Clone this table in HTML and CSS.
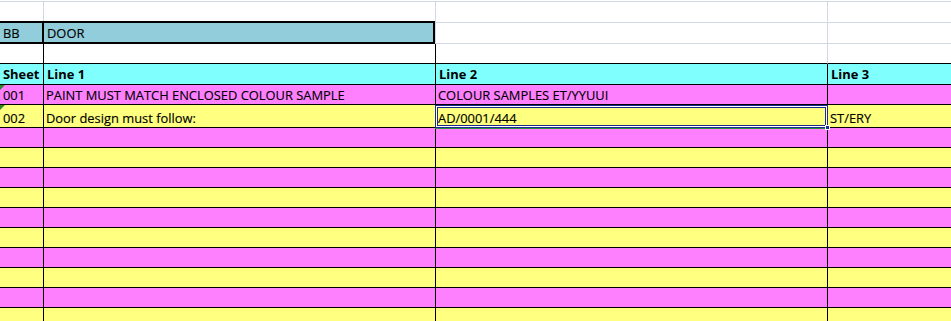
FILE: index.html
```html
<!DOCTYPE html>
<html>
<head>
<meta charset="utf-8">
<link rel="stylesheet" href="styles.css">
</head>
<body>
<div class="sheet">
  <div class="row r-top">
    <div class="cell"></div><div class="cell"></div><div class="cell"></div><div class="cell"></div>
  </div>
  <div class="row r-bb">
    <div class="cell bb-a">BB</div>
    <div class="cell bb-b">DOOR</div>
    <div class="cell bb-c"></div>
    <div class="cell bb-d"></div>
  </div>
  <div class="row r-blank">
    <div class="cell"></div><div class="cell"></div><div class="cell"></div><div class="cell"></div>
  </div>
  <div class="row r-head">
    <div class="cell">Sheet</div>
    <div class="cell">Line 1</div>
    <div class="cell">Line 2</div>
    <div class="cell">Line 3</div>
  </div>
  <div class="row data pink r-001">
    <div class="cell flag">001</div>
    <div class="cell">PAINT MUST MATCH ENCLOSED COLOUR SAMPLE</div>
    <div class="cell">COLOUR SAMPLES ET/YYUUI</div>
    <div class="cell"></div>
  </div>
  <div class="row data yellow r-002">
    <div class="cell flag">002</div>
    <div class="cell">Door design must follow:</div>
    <div class="cell selected">AD/0001/444<span class="sel-box"></span><span class="handle"></span></div>
    <div class="cell">ST/ERY</div>
  </div>
  <div class="row data pink"><div class="cell"></div><div class="cell"></div><div class="cell"></div><div class="cell"></div></div>
  <div class="row data yellow"><div class="cell"></div><div class="cell"></div><div class="cell"></div><div class="cell"></div></div>
  <div class="row data pink"><div class="cell"></div><div class="cell"></div><div class="cell"></div><div class="cell"></div></div>
  <div class="row data yellow"><div class="cell"></div><div class="cell"></div><div class="cell"></div><div class="cell"></div></div>
  <div class="row data pink"><div class="cell"></div><div class="cell"></div><div class="cell"></div><div class="cell"></div></div>
  <div class="row data yellow"><div class="cell"></div><div class="cell"></div><div class="cell"></div><div class="cell"></div></div>
  <div class="row data pink"><div class="cell"></div><div class="cell"></div><div class="cell"></div><div class="cell"></div></div>
  <div class="row data yellow"><div class="cell"></div><div class="cell"></div><div class="cell"></div><div class="cell"></div></div>
  <div class="row data pink"><div class="cell"></div><div class="cell"></div><div class="cell"></div><div class="cell"></div></div>
  <div class="row data yellow"><div class="cell"></div><div class="cell"></div><div class="cell"></div><div class="cell"></div></div>
</div>
</body>
</html>
```
FILE: styles.css
```css
html, body {
  margin: 0;
  padding: 0;
  background: #fff;
  overflow: hidden;
}

body {
  width: 951px;
  height: 321px;
  font-family: "Open Sans", "Liberation Sans", sans-serif;
  font-size: 12.9px;
  color: #000;
  -webkit-text-stroke: 0.15px #000;
}

.sheet {
  margin-top: 1px;
  display: flex;
  flex-direction: column;
  width: 951px;
}

.row {
  display: grid;
  grid-template-columns: 44px 392px 392px 1fr;
  flex: none;
}

.cell {
  box-sizing: border-box;
  display: flex;
  align-items: flex-end;
  padding: 0 0 1px 3px;
  line-height: 15px;
  white-space: nowrap;
  overflow: hidden;
}

/* top blank row: y 1..20 */
.r-top { height: 20px; }
.r-top .cell {
  border-top: 1px solid #d0d7e5;
  border-right: 1px solid #d0d7e5;
}
.r-top .cell:last-child { border-right: 0; }

/* BB / DOOR row: y 21..43 */
.r-bb { height: 23px; }
.bb-a, .bb-b {
  background: #92cddc;
  padding-bottom: 3px;
}
.bb-a {
  border-right: 1px solid #000;
  box-shadow: inset -1px 0 0 #000, inset 0 2px 0 #000, inset 0 -2px 0 #000;
}
.bb-b {
  border-right: 1px solid #d0d7e5;
  box-shadow: inset -2px 0 0 #000, inset 0 2px 0 #000, inset 0 -2px 0 #000;
}
.bb-c, .bb-d {
  border-top: 1px solid #fff;
  box-shadow: inset 0 1px 0 #d0d7e5, inset 0 -1px 0 #d0d7e5;
}
.bb-c { border-right: 1px solid #d0d7e5; }

/* blank row below: y 44..63 */
.r-blank { height: 20px; }
.r-blank .cell { border-bottom: 1px solid #000; }
.r-blank .cell:nth-child(1),
.r-blank .cell:nth-child(2) { border-right: 1px solid #000; }
.r-blank .cell:nth-child(3) { border-right: 1px solid #d0d7e5; }

/* header row: y 64..84 */
.r-head { height: 21px; background: #80ffff; font-weight: 700; }
.r-head .cell {
  border-right: 1px solid #000;
  border-bottom: 1px solid #000;
  padding-bottom: 2px;
  -webkit-text-stroke: 0;
}
.r-head .cell:last-child { border-right: 0; }

/* data rows */
.data { height: 20px; }
.r-002 { height: 23px; }
.pink { background: #ff80ff; }
.yellow { background: #ffff80; }
.data .cell {
  border-right: 1px solid #000;
  border-bottom: 1px solid #000;
}
.data .cell:last-child { border-right: 0; }
.data .cell:nth-child(n+2) { padding-left: 2px; }
.data .cell:first-child { padding-left: 3px; }

.flag { position: relative; }
.flag::before {
  content: "";
  position: absolute;
  left: 0;
  top: 0;
  width: 0;
  height: 0;
  border-top: 5px solid #2a8a2a;
  border-right: 5px solid transparent;
}

/* selected cell overlay */
.selected { position: relative; overflow: visible; }
.sel-box {
  position: absolute;
  left: -1px;
  top: 0;
  right: -1px;
  bottom: -1px;
  border: 1px solid #1b2a8e;
  box-shadow: inset 0 0 0 1px #fff, inset 0 0 0 2px #1b2a8e, 0 1px 0 #2f8f3a;
  pointer-events: none;
}
.handle {
  position: absolute;
  right: -3px;
  bottom: -3px;
  width: 5px;
  height: 5px;
  box-sizing: border-box;
  background: #1b2a8e;
  border: 1px solid #fff;
  z-index: 2;
}
```
